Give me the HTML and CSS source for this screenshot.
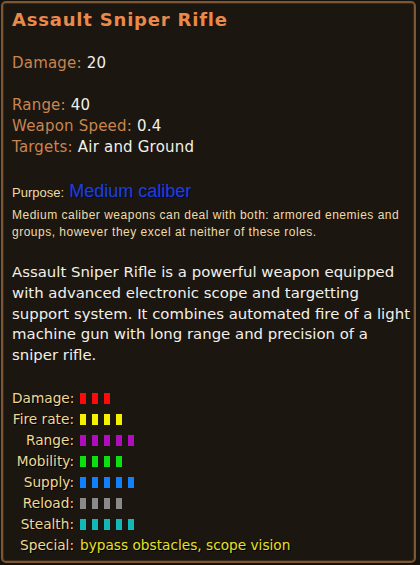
FILE: index.html
```html
<!DOCTYPE html>
<html lang="en">
<head>
  <meta charset="UTF-8">
  <title>Assault Sniper Rifle</title>
  <link rel="stylesheet" href="styles.css">
</head>
<body>
  <div class="tooltip">
    <!-- Header -->
    <h1 class="title">Assault Sniper Rifle</h1>

    <!-- Basic stats -->
    <div class="basics">
      <div><span class="key">Damage:</span> 20</div>
      <div class="spacer"></div>
      <div><span class="key">Range:</span> 40</div>
      <div><span class="key">Weapon Speed:</span> 0.4</div>
      <div><span class="key">Targets:</span> Air and Ground</div>
    </div>

    <!-- Purpose -->
    <div class="purpose">
      <span class="purpose-label">Purpose:</span> <span class="purpose-value">Medium caliber</span>
    </div>
    <p class="purpose-desc">Medium caliber weapons can deal with both: armored enemies and groups, however they excel at neither of these roles.</p>

    <!-- Description -->
    <p class="description">Assault Sniper Rifle is a powerful weapon equipped with advanced electronic scope and targetting support system. It combines automated fire of a light machine gun with long range and precision of a sniper rifle.</p>

    <!-- Ratings -->
    <div class="ratings">
      <span class="label">Damage:</span>
      <span class="bars red"><i></i><i></i><i></i></span>
      <span class="label">Fire rate:</span>
      <span class="bars yellow"><i></i><i></i><i></i><i></i></span>
      <span class="label">Range:</span>
      <span class="bars purple"><i></i><i></i><i></i><i></i><i></i></span>
      <span class="label">Mobility:</span>
      <span class="bars green"><i></i><i></i><i></i><i></i></span>
      <span class="label">Supply:</span>
      <span class="bars blue"><i></i><i></i><i></i><i></i><i></i></span>
      <span class="label">Reload:</span>
      <span class="bars grey"><i></i><i></i><i></i><i></i></span>
      <span class="label">Stealth:</span>
      <span class="bars teal"><i></i><i></i><i></i><i></i><i></i></span>
      <span class="label">Special:</span>
      <span class="special">bypass obstacles, scope vision</span>
    </div>
  </div>
</body>
</html>
```

FILE: styles.css
```css
/* General Reset */
* {
  margin: 0;
  padding: 0;
  box-sizing: border-box;
}
body {
  background-color: #16120d;
  font-family: "DejaVu Sans", Verdana, sans-serif;
  width: 420px;
  height: 565px;
  overflow: hidden;
}
.tooltip {
  margin: 1px 4px 0 1px;
  height: 562px;
  background-color: #1b1610;
  border: 2px solid #7d5634;
  border-radius: 5px;
  box-shadow: inset 0 0 0 1px #3a2818;
  padding: 6px 3px 0 9px;
}
.title {
  font-size: 18px;
  font-weight: bold;
  line-height: 22px;
  letter-spacing: 0.8px;
  color: #ea8a4a;
}
.basics {
  margin-top: 22px;
  font-size: 15px;
  line-height: 21px;
  letter-spacing: 0.2px;
  color: #f2f0ea;
}
.basics .spacer {
  height: 21px;
}
.key {
  color: #c98550;
}
.purpose {
  margin-top: 22px;
  line-height: 22px;
}
.purpose-label {
  font-family: "Liberation Sans", Arial, sans-serif;
  font-size: 13px;
  color: #f0dca4;
}
.purpose-value {
  font-family: "Liberation Sans", Arial, sans-serif;
  font-size: 18px;
  color: #1b3fe0;
  text-shadow: 1px 1px 0 #0a0a30;
}
.purpose-desc {
  margin-top: 3px;
  font-family: "Liberation Sans", Arial, sans-serif;
  font-size: 12px;
  line-height: 17px;
  letter-spacing: 0.5px;
  color: #eedcaa;
}
.description {
  margin-top: 21px;
  font-size: 14.9px;
  line-height: 20.8px;
  color: #f2f0ea;
}
.ratings {
  margin-top: 22px;
  display: grid;
  grid-template-columns: 62px auto;
  column-gap: 6px;
  grid-auto-rows: 21px;
  align-items: center;
  font-size: 13.7px;
}
.label {
  text-align: right;
  white-space: nowrap;
  color: #f0d894;
  text-shadow: 1px 1px 0 #000;
}
.bars {
  display: flex;
  gap: 6px;
}
.bars i {
  display: block;
  width: 6px;
  height: 11px;
}
.red i { background-color: #ff0a0a; }
.yellow i { background-color: #f4f000; }
.purple i { background-color: #b10cbf; }
.green i { background-color: #0ce010; }
.blue i { background-color: #1180ff; }
.grey i { background-color: #8a8a8a; }
.teal i { background-color: #10b8b8; }
.special {
  color: #e6e022;
  text-shadow: 1px 1px 0 #000;
}
```
